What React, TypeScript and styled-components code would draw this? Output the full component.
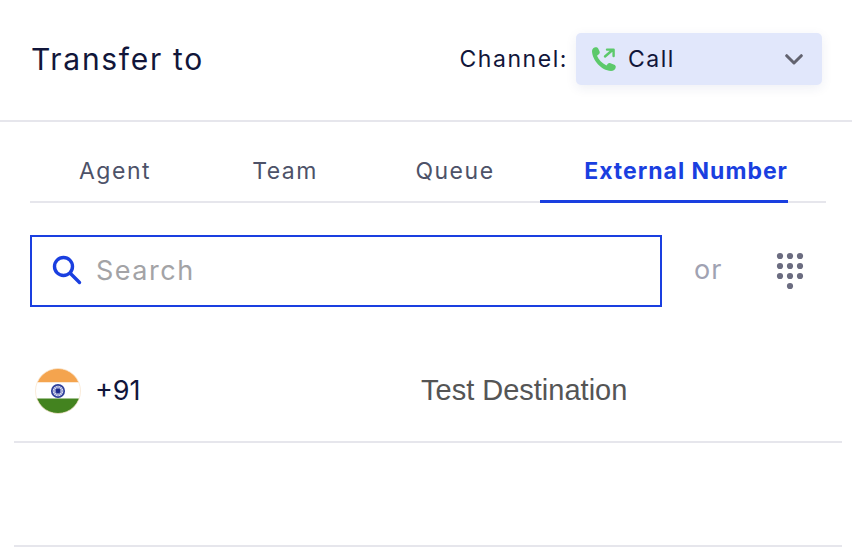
import styled, { createGlobalStyle } from "styled-components";

const GlobalStyle = createGlobalStyle`
  html, body {
    margin: 0;
    padding: 0;
    background: #ffffff;
  }
  * {
    box-sizing: border-box;
  }
`;

const Page = styled.div`
  width: 852px;
  height: 556px;
  overflow: hidden;
  display: flex;
  flex-direction: column;
  font-family: "Inter", "Lato", sans-serif;
  color: #11163a;
`;

const Header = styled.header`
  height: 122px;
  flex: none;
  display: flex;
  align-items: flex-start;
  justify-content: space-between;
  padding: 33px 30px 0 31px;
  border-bottom: 2px solid #e6e6ec;
`;

const Title = styled.h1`
  margin: 0;
  height: 52px;
  line-height: 52px;
  font-size: 30px;
  font-weight: 400;
  letter-spacing: 1.7px;
  color: #11163a;
`;

const ChannelGroup = styled.div`
  display: flex;
  align-items: center;
  gap: 8px;
`;

const ChannelLabel = styled.span`
  font-size: 23px;
  letter-spacing: 1.55px;
  color: #11163a;
`;

const ChannelSelect = styled.div`
  width: 246px;
  height: 52px;
  display: flex;
  align-items: center;
  gap: 12px;
  padding: 0 19px 0 16px;
  background: #e1e7fb;
  border-radius: 5px;
  box-shadow: 0 3px 12px rgba(40, 50, 110, 0.08);
  font-size: 23px;
  letter-spacing: 1.5px;
`;

const SelectValue = styled.span`
  flex: 1;
`;

const Tabs = styled.nav`
  margin: 27px 26px 0 30px;
  height: 54px;
  flex: none;
  display: grid;
  grid-template-columns: 170px 170px 170px 248px;
  border-bottom: 2px solid #e6e6ec;
`;

const Tab = styled.div<{ $active?: boolean }>`
  height: 54px;
  display: flex;
  align-items: flex-start;
  justify-content: ${(p) => (p.$active ? "flex-end" : "center")};
  padding-top: 7px;
  font-size: 23px;
  line-height: 30px;
  letter-spacing: ${(p) => (p.$active ? "1px" : "1.5px")};
  font-weight: ${(p) => (p.$active ? 700 : 400)};
  color: ${(p) => (p.$active ? "#1a3fe0" : "#4d5268")};
  border-bottom: ${(p) => (p.$active ? "3px solid #1a3fe0" : "none")};
`;

const SearchRow = styled.div`
  margin: 32px 0 0 30px;
  flex: none;
  display: flex;
  align-items: center;
`;

const SearchBox = styled.div`
  width: 632px;
  height: 72px;
  display: flex;
  align-items: center;
  gap: 14px;
  padding: 0 0 2px 20px;
  border: 2px solid #1a3fe0;
`;

const Placeholder = styled.span`
  font-size: 27px;
  letter-spacing: 1.5px;
  color: #a3a3a6;
`;

const OrLabel = styled.span`
  margin: 0 0 4px 32px;
  font-size: 27px;
  letter-spacing: 1px;
  color: #a0a2b2;
`;

const DialButton = styled.div`
  margin-left: 54px;
  display: flex;
`;

const DestinationRow = styled.div`
  margin: 0 10px 0 14px;
  height: 136px;
  flex: none;
  display: flex;
  align-items: center;
  padding: 32px 0 0 21px;
  border-bottom: 2px solid #e6e6ec;
`;

const FlagBadge = styled.div`
  display: flex;
  margin-top: 2px;
`;

const CountryCode = styled.span`
  width: 326px;
  margin-left: 14px;
  font-size: 27px;
  color: #11163a;
`;

const DestinationName = styled.span`
  font-family: "Liberation Sans", Arial, sans-serif;
  font-size: 29px;
  color: #555555;
`;

const EmptyRow = styled.div`
  margin: 0 10px 0 14px;
  height: 104px;
  flex: none;
  border-bottom: 2px solid #e6e6ec;
`;

function CallIcon() {
  return (
    <svg width="24" height="24" viewBox="0 0 24 24" fill="none">
      <path
        d="M2.5 0.5 C1 1 0 2.5 0 4.5 C0.5 13 9 23.5 19 24 C21.5 24 23.5 22.5 23.8 20 C23.8 19 23.2 18.2 22.3 17.8 L18.5 16.2 C17.5 15.8 16.5 16 15.8 16.8 L14.5 18.5 C10 16.5 6.5 12.5 5 8.8 L6.8 7.3 C7.6 6.6 8 5.5 7.6 4.5 L6.2 1.5 C5.6 0.3 4 0 2.5 0.5 Z"
        fill="#5cc96b"
      />
      <path
        d="M13 9.5 L20.5 3 M15 2.6 H21.6 V9"
        stroke="#5cc96b"
        strokeWidth="2.4"
        strokeLinecap="round"
        strokeLinejoin="round"
      />
    </svg>
  );
}

function ChevronIcon() {
  return (
    <svg width="18" height="11" viewBox="0 0 18 11" fill="none">
      <path d="M1.7 1.7 L9 9 L16.3 1.7" stroke="#62636f" strokeWidth="3" strokeLinecap="round" strokeLinejoin="round" />
    </svg>
  );
}

function SearchIcon() {
  return (
    <svg width="30" height="30" viewBox="0 0 30 30" fill="none">
      <circle cx="11.5" cy="11.5" r="9" stroke="#1a3fe0" strokeWidth="3.4" />
      <path d="M18.5 18.5 L27.5 27.5" stroke="#1a3fe0" strokeWidth="3.4" strokeLinecap="round" />
    </svg>
  );
}

function DialPadIcon() {
  const dots = [
    [4, 4], [14, 4], [24, 4],
    [4, 14], [14, 14], [24, 14],
    [4, 24], [14, 24], [24, 24],
    [14, 34],
  ];
  return (
    <svg width="28" height="38" viewBox="0 0 28 38">
      {dots.map(([cx, cy]) => (
        <circle key={`${cx}-${cy}`} cx={cx} cy={cy} r="3.1" fill="#6b6c80" />
      ))}
    </svg>
  );
}

function IndiaFlag() {
  const spokes = Array.from({ length: 12 }, (_, i) => (i * Math.PI) / 6);
  return (
    <svg width="46" height="46" viewBox="0 0 46 46">
      <defs>
        <clipPath id="flagCircle">
          <circle cx="23" cy="23" r="22.5" />
        </clipPath>
      </defs>
      <g clipPath="url(#flagCircle)">
        <rect width="46" height="14.5" fill="#f4a44e" />
        <rect y="14.5" width="46" height="16" fill="#ffffff" />
        <rect y="30.5" width="46" height="15.5" fill="#43831f" />
      </g>
      <circle cx="23" cy="23" r="22.5" fill="none" stroke="#f9e6cf" strokeWidth="0.8" />
      <circle cx="23" cy="23" r="6.2" fill="#d9dcf0" stroke="#2f3f9a" strokeWidth="1.7" />
      {spokes.map((a) => (
        <line
          key={a}
          x1="23"
          y1="23"
          x2={23 + 5.5 * Math.cos(a)}
          y2={23 + 5.5 * Math.sin(a)}
          stroke="#5a66b0"
          strokeWidth="0.8"
        />
      ))}
      <circle cx="23" cy="23" r="2.4" fill="#1c2a8c" />
    </svg>
  );
}

export default function App() {
  return (
    <>
      <GlobalStyle />
      <Page>
        <Header>
          <Title>Transfer to</Title>
          <ChannelGroup>
            <ChannelLabel>Channel:</ChannelLabel>
            <ChannelSelect>
              <CallIcon />
              <SelectValue>Call</SelectValue>
              <ChevronIcon />
            </ChannelSelect>
          </ChannelGroup>
        </Header>
        <Tabs>
          <Tab>Agent</Tab>
          <Tab>Team</Tab>
          <Tab>Queue</Tab>
          <Tab $active>External Number</Tab>
        </Tabs>
        <SearchRow>
          <SearchBox>
            <SearchIcon />
            <Placeholder>Search</Placeholder>
          </SearchBox>
          <OrLabel>or</OrLabel>
          <DialButton>
            <DialPadIcon />
          </DialButton>
        </SearchRow>
        <DestinationRow>
          <FlagBadge>
            <IndiaFlag />
          </FlagBadge>
          <CountryCode>+91</CountryCode>
          <DestinationName>Test Destination</DestinationName>
        </DestinationRow>
        <EmptyRow />
      </Page>
    </>
  );
}
